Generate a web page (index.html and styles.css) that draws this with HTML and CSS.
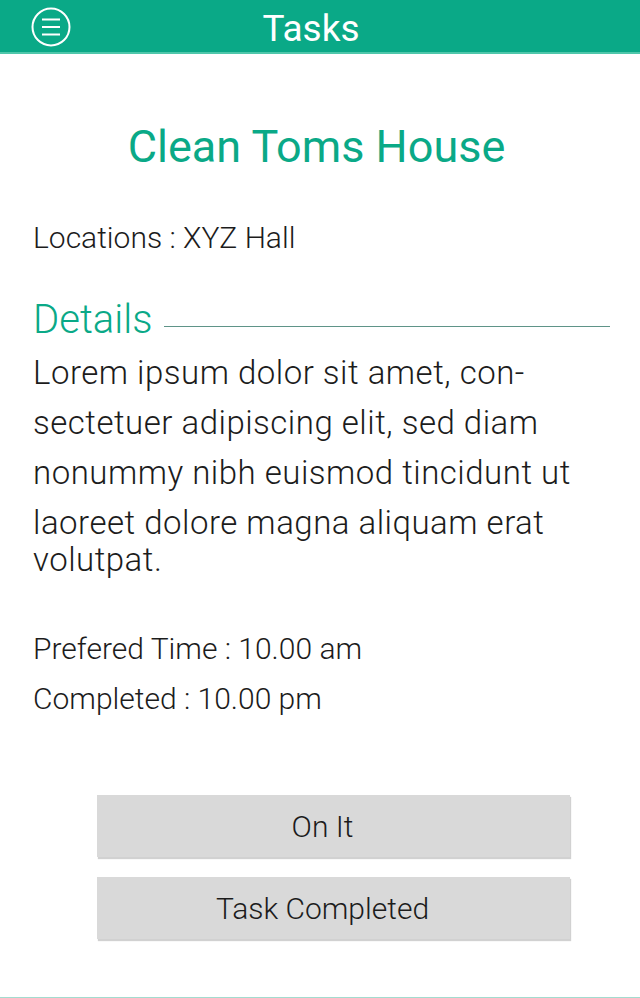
FILE: index.html
```html
<!DOCTYPE html>
<html>
<head>
<meta charset="utf-8">
<link rel="stylesheet" href="styles.css">
</head>
<body>
<div class="app">
  <header class="topbar">
    <button class="menu-btn" aria-label="menu">
      <svg width="40" height="40" viewBox="0 0 40 40">
        <circle cx="20" cy="20" r="18.5" fill="none" stroke="#fff" stroke-width="2"/>
        <path d="M11 12.5h18M11 20h18M11 27.5h18" stroke="#fff" stroke-width="2" fill="none"/>
      </svg>
    </button>
    <h1 class="topbar-title">Tasks</h1>
  </header>
  <main class="content">
    <h2 class="task-title">Clean Toms House</h2>
    <p class="info location">Locations : XYZ Hall</p>
    <div class="section-head">
      <span class="section-label">Details</span>
      <span class="section-rule"></span>
    </div>
    <p class="details">Lorem ipsum dolor sit amet, con-<br>sectetuer adipiscing elit, sed diam<br>nonummy nibh euismod tincidunt ut<br>laoreet dolore magna aliquam erat<span class="last-line">volutpat.</span></p>
    <div class="times">
      <p class="info">Prefered Time : 10.00 am</p>
      <p class="info">Completed : 10.00 pm</p>
    </div>
    <div class="actions">
      <button class="action-btn">On It</button>
      <button class="action-btn">Task Completed</button>
    </div>
  </main>
</div>
</body>
</html>
```
FILE: styles.css
```css
* { box-sizing: border-box; }
html, body { margin: 0; padding: 0; background: #fff; }
body {
  font-family: Roboto, "Liberation Sans", sans-serif;
  color: #1c1c1c;
}
.app {
  width: 640px;
  height: 998px;
  display: flex;
  flex-direction: column;
  border-bottom: 1px solid #a3dccf;
}
.topbar {
  height: 54px;
  background: #0aa987;
  border-bottom: 2px solid #4fc7ab;
  position: relative;
  display: flex;
  align-items: flex-start;
  justify-content: center;
}
.menu-btn {
  position: absolute;
  left: 31px;
  top: 7px;
  width: 40px;
  height: 40px;
  padding: 0;
  border: 0;
  background: none;
  display: block;
}
.menu-btn svg { display: block; }
.topbar-title {
  margin: 3px 0 0 -18px;
  font-weight: 400;
  font-size: 37px;
  line-height: 52px;
  color: #fff;
}
.content {
  flex: 1;
  padding: 0 30px 0 33px;
  display: flex;
  flex-direction: column;
}
.task-title {
  margin: 66px 0 0 0;
  text-align: center;
  font-weight: 400;
  font-size: 45px;
  line-height: 54px;
  color: #0aa987;
  padding-right: 10px;
}
.info {
  margin: 0;
  font-weight: 300;
  font-size: 30px;
  line-height: 50px;
  color: #1c1c1c;
}
.location { margin-top: 39px; }
.section-head {
  display: flex;
  align-items: center;
  gap: 12px;
  margin-top: 34px;
}
.section-label {
  font-weight: 300;
  font-size: 40px;
  line-height: 46px;
  color: #0aa987;
}
.section-rule {
  flex: 1;
  height: 1px;
  background: #5f9488;
  margin-top: 13px;
}
.details {
  margin: 5px 0 0 0;
  font-weight: 300;
  font-size: 33px;
  letter-spacing: 0.5px;
  line-height: 50px;
  color: #1c1c1c;
}
.last-line {
  display: block;
  line-height: 36px;
  margin-top: -6px;
}
.times { margin-top: 46px; }
.actions {
  margin-top: 71px;
  display: flex;
  flex-direction: column;
  align-items: flex-start;
  gap: 20px;
  padding-left: 64px;
}
.action-btn {
  width: 473px;
  height: 62px;
  border: 0;
  border-radius: 0;
  background: #d9d9d9;
  box-shadow: 1px 2px 1px rgba(0,0,0,0.18);
  font-family: Roboto, "Liberation Sans", sans-serif;
  font-weight: 300;
  font-size: 30px;
  color: #1c1c1c;
  padding: 0 22px 0 0;
}
```
